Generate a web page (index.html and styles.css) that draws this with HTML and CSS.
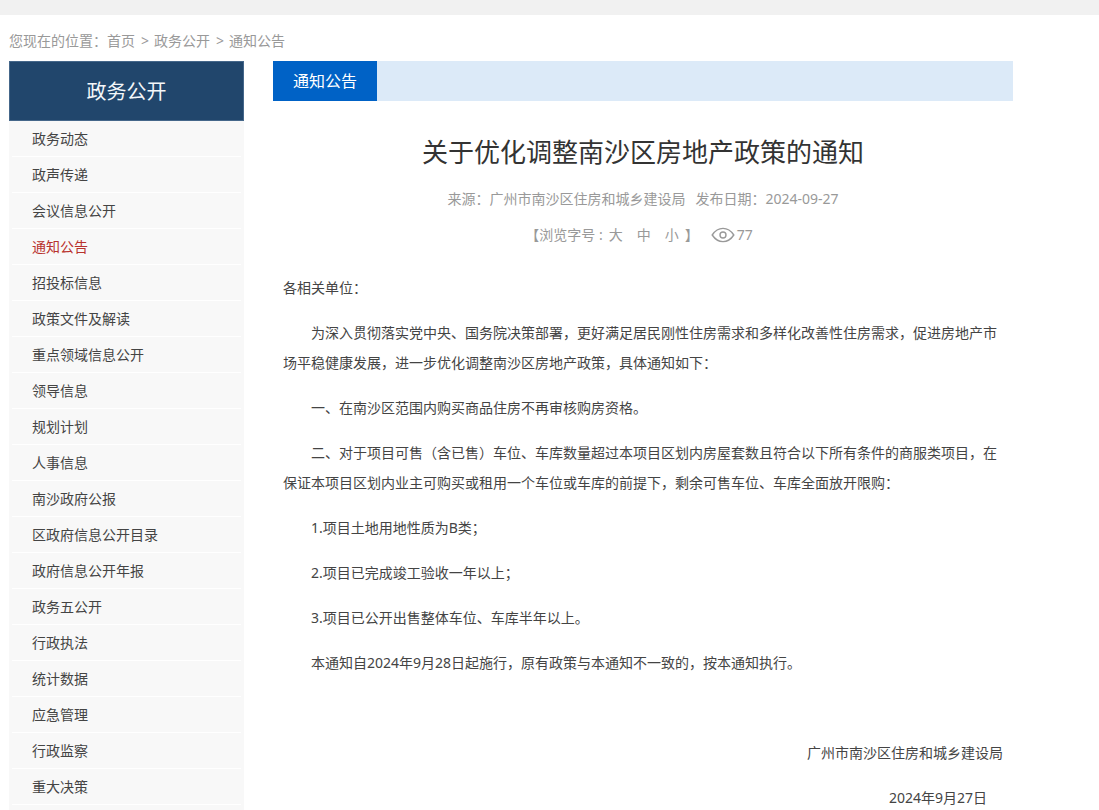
FILE: index.html
```html
<!DOCTYPE html>
<html lang="zh-CN">
<head>
<meta charset="utf-8">
<meta name="viewport" content="width=device-width, initial-scale=1">
<title>关于优化调整南沙区房地产政策的通知</title>
<link rel="stylesheet" href="styles.css">
</head>
<body>
<div class="topbar"></div>
<div class="page">
  <nav class="crumbs">
    <span>您现在的位置：</span><a href="#">首页</a><span class="sep">&gt;</span><a href="#">政务公开</a><span class="sep">&gt;</span><a href="#">通知公告</a>
  </nav>
  <div class="columns">
    <aside class="sidebar">
      <h2 class="sidebar-title">政务公开</h2>
      <ul class="menu">
        <li><a href="#">政务动态</a></li>
        <li><a href="#">政声传递</a></li>
        <li><a href="#">会议信息公开</a></li>
        <li><a class="active" href="#">通知公告</a></li>
        <li><a href="#">招投标信息</a></li>
        <li><a href="#">政策文件及解读</a></li>
        <li><a href="#">重点领域信息公开</a></li>
        <li><a href="#">领导信息</a></li>
        <li><a href="#">规划计划</a></li>
        <li><a href="#">人事信息</a></li>
        <li><a href="#">南沙政府公报</a></li>
        <li><a href="#">区政府信息公开目录</a></li>
        <li><a href="#">政府信息公开年报</a></li>
        <li><a href="#">政务五公开</a></li>
        <li><a href="#">行政执法</a></li>
        <li><a href="#">统计数据</a></li>
        <li><a href="#">应急管理</a></li>
        <li><a href="#">行政监察</a></li>
        <li><a href="#">重大决策</a></li>
      </ul>
    </aside>
    <main class="main">
      <div class="tabs"><a class="tab" href="#">通知公告</a></div>
      <article class="article">
        <h1 class="title">关于优化调整南沙区房地产政策的通知</h1>
        <div class="meta">
          <span>来源：广州市南沙区住房和城乡建设局</span>
          <span>发布日期：2024-09-27</span>
        </div>
        <div class="tools">
          <div class="sizes">
            <span>【浏览字号 :</span>
            <button type="button">大</button>
            <button type="button">中</button>
            <button type="button">小</button>
            <span>】</span>
          </div>
          <div class="views">
            <svg class="eye" viewBox="0 0 24 16" aria-hidden="true">
              <path d="M1.2 8C4 3.8 7.7 1.4 12 1.4S20 3.8 22.8 8C20 12.2 16.3 14.6 12 14.6S4 12.2 1.2 8Z"/>
              <circle cx="12" cy="8" r="3"/>
            </svg>
            <span>77</span>
          </div>
        </div>
        <div class="content">
          <p class="flush">各相关单位：</p>
          <p>为深入贯彻落实党中央、国务院决策部署，更好满足居民刚性住房需求和多样化改善性住房需求，促进房地产市场平稳健康发展，进一步优化调整南沙区房地产政策，具体通知如下：</p>
          <p>一、在南沙区范围内购买商品住房不再审核购房资格。</p>
          <p>二、对于项目可售（含已售）车位、车库数量超过本项目区划内房屋套数且符合以下所有条件的商服类项目，在保证本项目区划内业主可购买或租用一个车位或车库的前提下，剩余可售车位、车库全面放开限购：</p>
          <p>1.项目土地用地性质为B类；</p>
          <p>2.项目已完成竣工验收一年以上；</p>
          <p>3.项目已公开出售整体车位、车库半年以上。</p>
          <p>本通知自2024年9月28日起施行，原有政策与本通知不一致的，按本通知执行。</p>
          <p class="sign">广州市南沙区住房和城乡建设局</p>
          <p class="date">2024年9月27日</p>
        </div>
      </article>
    </main>
  </div>
</div>
</body>
</html>
```
FILE: styles.css
```css
* {
  box-sizing: border-box;
}

body {
  margin: 0;
  background: #fff;
  color: #444;
  font: 14px/30px "Noto Sans", "Noto Sans CJK SC", sans-serif;
}

a {
  color: inherit;
  text-decoration: none;
}

h1,
h2,
p,
ul {
  margin: 0;
  padding: 0;
  font-weight: normal;
}

.topbar {
  height: 15px;
  background: #f1f1f1;
}

.page {
  padding: 0 86px 0 9px;
}

.crumbs {
  padding: 11px 0 5px;
  color: #999;
}

.sep {
  margin: 0 5px 0 6px;
}

.columns {
  display: flex;
  gap: 29px;
}

.sidebar {
  flex: 0 0 235px;
  background: #f8f8f8;
}

.sidebar-title {
  padding-top: 1px;
  background: #21466c;
  border: 1px solid #45678a;
  color: #f4f7fa;
  font-size: 20px;
  line-height: 57px;
  text-align: center;
}

.menu {
  list-style: none;
  padding: 0 3px;
}

.menu a {
  display: block;
  padding-left: 20px;
  border-bottom: 1px solid #fff;
  line-height: 35px;
}

.menu .active {
  color: #b8322e;
}

.main {
  flex: 1;
  min-width: 0;
}

.tabs {
  display: flex;
  background: #dceaf8;
}

.tab {
  padding: 0 20px;
  background: #0062c6;
  color: #fff;
  font-size: 16px;
  line-height: 40px;
}

.article {
  padding: 30px 10px 0;
}

.title {
  color: #333;
  font-size: 26px;
  line-height: 42px;
  text-align: center;
}

.meta,
.tools {
  display: flex;
  justify-content: center;
  gap: 10px;
  color: #999;
  line-height: 36px;
}

.meta {
  padding-top: 8px;
}

.tools {
  gap: 12px;
  padding-right: 8px;
}

.sizes {
  display: flex;
  gap: 6px;
}

.sizes button {
  padding: 0;
  margin-right: 8px;
  border: 0;
  background: none;
  color: inherit;
  font: inherit;
  cursor: pointer;
}

.sizes button:last-of-type {
  margin-right: 0;
}

.views {
  display: flex;
  align-items: center;
  gap: 2px;
}

.eye {
  width: 24px;
  height: 16px;
  fill: none;
  stroke: #999;
  stroke-width: 1.4;
}

.content {
  padding-top: 20px;
}

.content p {
  margin-bottom: 15px;
  text-indent: 2em;
}

.content .flush {
  text-indent: 0;
}

.content .sign {
  margin-top: 60px;
  text-align: right;
}

.content .date {
  padding-right: 16px;
  text-align: right;
}
```
